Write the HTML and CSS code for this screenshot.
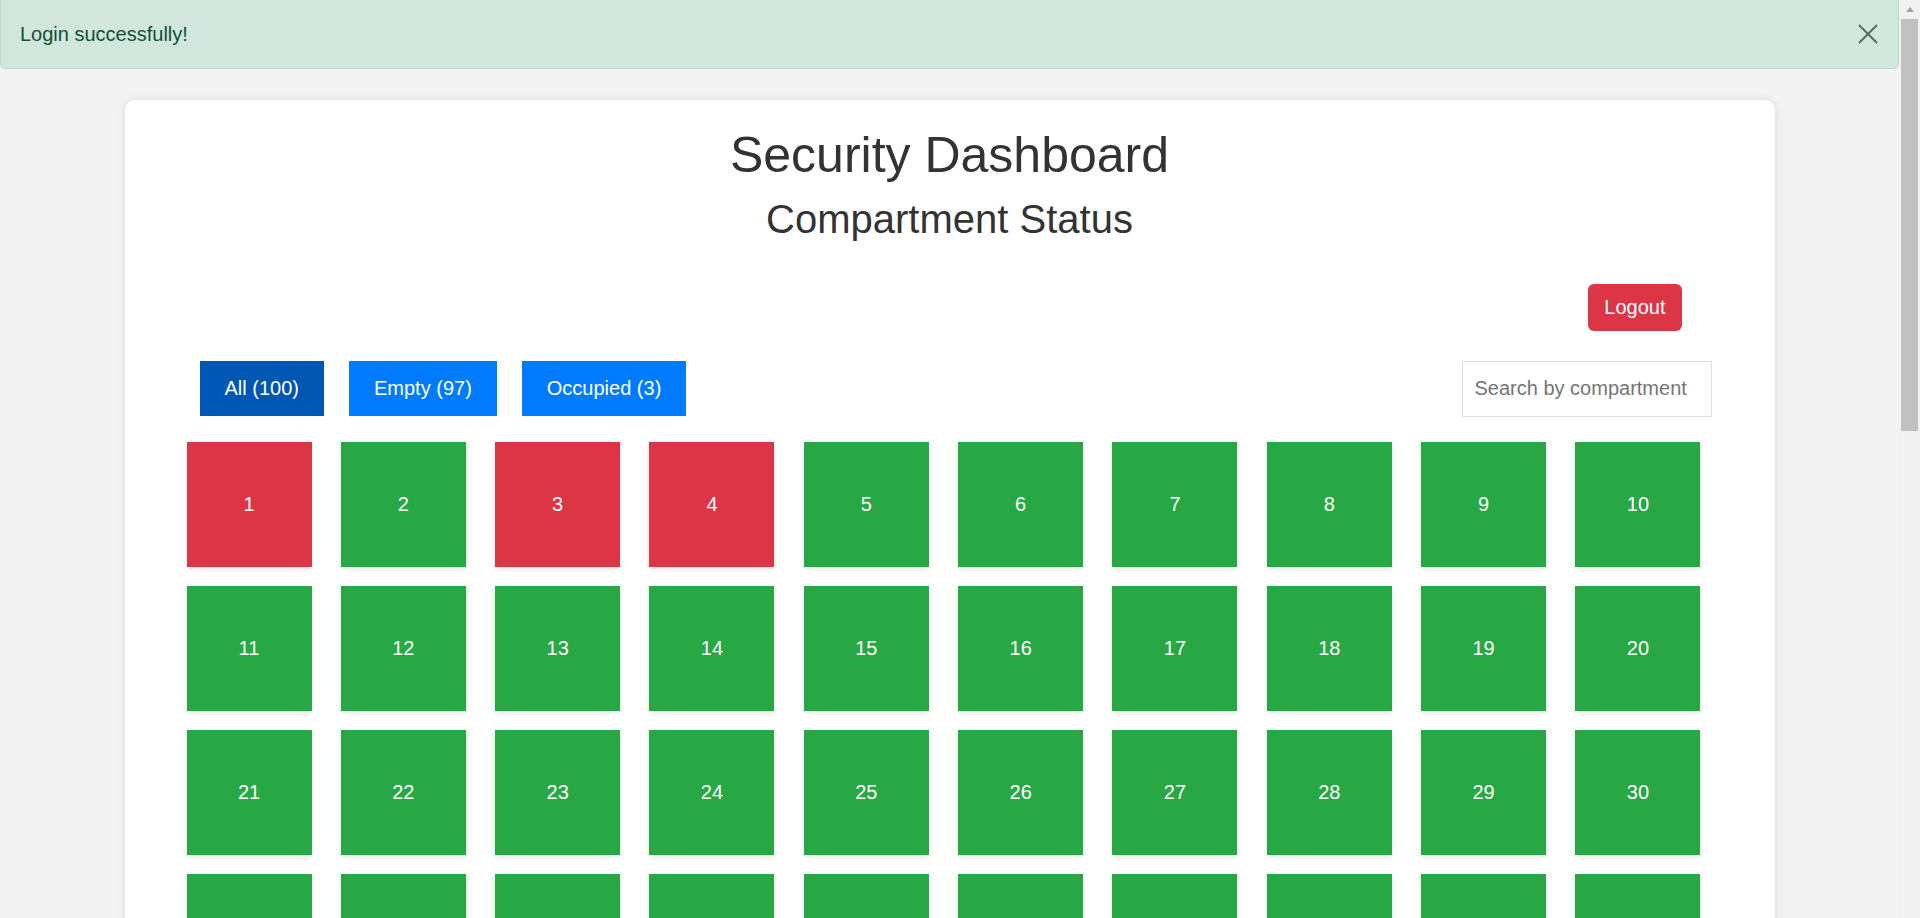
FILE: index.html
```html
<!DOCTYPE html>
<html lang="en">
<head>
<meta charset="utf-8">
<title>Security Dashboard</title>
<link rel="stylesheet" href="styles.css">
</head>
<body>
<div class="window">
  <div class="page">
    <div class="alert">
      <span class="alert-text">Login successfully!</span>
      <button class="alert-close" aria-label="Close">
        <svg width="20" height="20" viewBox="0 0 20 20"><path d="M1 1 L19 19 M19 1 L1 19" stroke="#000" stroke-width="2" fill="none"/></svg>
      </button>
    </div>
    <div class="card">
      <h1 class="title">Security Dashboard</h1>
      <h2 class="subtitle">Compartment Status</h2>
      <div class="toolbar">
        <button class="logout">Logout</button>
      </div>
      <div class="filters">
        <div class="filter-group">
          <button class="filter active">All (100)</button>
          <button class="filter">Empty (97)</button>
          <button class="filter">Occupied (3)</button>
        </div>
        <input class="search" type="text" placeholder="Search by compartment">
      </div>
      <div class="grid">
        <div class="tile occupied">1</div><div class="tile">2</div><div class="tile occupied">3</div><div class="tile occupied">4</div><div class="tile">5</div><div class="tile">6</div><div class="tile">7</div><div class="tile">8</div><div class="tile">9</div><div class="tile">10</div>
        <div class="tile">11</div><div class="tile">12</div><div class="tile">13</div><div class="tile">14</div><div class="tile">15</div><div class="tile">16</div><div class="tile">17</div><div class="tile">18</div><div class="tile">19</div><div class="tile">20</div>
        <div class="tile">21</div><div class="tile">22</div><div class="tile">23</div><div class="tile">24</div><div class="tile">25</div><div class="tile">26</div><div class="tile">27</div><div class="tile">28</div><div class="tile">29</div><div class="tile">30</div>
        <div class="tile">31</div><div class="tile">32</div><div class="tile">33</div><div class="tile">34</div><div class="tile">35</div><div class="tile">36</div><div class="tile">37</div><div class="tile">38</div><div class="tile">39</div><div class="tile">40</div>
        <div class="tile">41</div><div class="tile">42</div><div class="tile">43</div><div class="tile">44</div><div class="tile">45</div><div class="tile">46</div><div class="tile">47</div><div class="tile">48</div><div class="tile">49</div><div class="tile">50</div>
        <div class="tile">51</div><div class="tile">52</div><div class="tile">53</div><div class="tile">54</div><div class="tile">55</div><div class="tile">56</div><div class="tile">57</div><div class="tile">58</div><div class="tile">59</div><div class="tile">60</div>
        <div class="tile">61</div><div class="tile">62</div><div class="tile">63</div><div class="tile">64</div><div class="tile">65</div><div class="tile">66</div><div class="tile">67</div><div class="tile">68</div><div class="tile">69</div><div class="tile">70</div>
        <div class="tile">71</div><div class="tile">72</div><div class="tile">73</div><div class="tile">74</div><div class="tile">75</div><div class="tile">76</div><div class="tile">77</div><div class="tile">78</div><div class="tile">79</div><div class="tile">80</div>
        <div class="tile">81</div><div class="tile">82</div><div class="tile">83</div><div class="tile">84</div><div class="tile">85</div><div class="tile">86</div><div class="tile">87</div><div class="tile">88</div><div class="tile">89</div><div class="tile">90</div>
        <div class="tile">91</div><div class="tile">92</div><div class="tile">93</div><div class="tile">94</div><div class="tile">95</div><div class="tile">96</div><div class="tile">97</div><div class="tile">98</div><div class="tile">99</div><div class="tile">100</div>
      </div>
    </div>
  </div>
  <div class="scrollbar">
    <div class="scroll-arrow"></div>
    <div class="scroll-thumb"></div>
  </div>
</div>
</body>
</html>
```
FILE: styles.css
```css
html, body {
  margin: 0;
  padding: 0;
  height: 100%;
  overflow: hidden;
}

body {
  background: #f3f3f3;
  font-family: "Liberation Sans", Arial, sans-serif;
  color: #333;
}

.window {
  display: flex;
  height: 918px;
}

.page {
  flex: 1;
  overflow: hidden;
}

.alert {
  box-sizing: border-box;
  height: 69px;
  display: flex;
  align-items: center;
  justify-content: space-between;
  padding: 0 20px 0 19px;
  background: #d1e7dd;
  border: 1px solid #badbcc;
  border-top: none;
  border-radius: 0 0 6px 6px;
  color: #0f5132;
  font-size: 20px;
}

.alert-close {
  border: none;
  background: transparent;
  padding: 0;
  width: 20px;
  height: 20px;
  opacity: 0.55;
  cursor: pointer;
}

.alert-close svg {
  display: block;
}

.card {
  width: 1650px;
  margin: 31px auto 0;
  min-height: 1000px;
  background: #fff;
  border-radius: 10px;
  box-shadow: 0 0 10px rgba(0, 0, 0, 0.1);
  padding-top: 26px;
}

.title {
  margin: 0;
  font-size: 50px;
  font-weight: 400;
  line-height: normal;
  text-align: center;
  color: #333;
}

.subtitle {
  margin: 12.5px 0 0;
  font-size: 40px;
  font-weight: 400;
  line-height: normal;
  text-align: center;
  color: #333;
}

.toolbar {
  display: flex;
  justify-content: flex-end;
  margin-top: 42px;
  padding-right: 93px;
}

.logout {
  border: none;
  background: #dc3545;
  color: #fff;
  font-family: inherit;
  font-size: 20px;
  line-height: 23px;
  padding: 12px 16px;
  border-radius: 6px;
}

.filters {
  display: flex;
  justify-content: space-between;
  align-items: center;
  margin-top: 30px;
  padding: 0 63px 0 75px;
}

.filter-group {
  display: flex;
  gap: 25px;
}

.filter {
  border: none;
  height: 55px;
  padding: 0 25px;
  background: #007bff;
  color: #fff;
  font-family: inherit;
  font-size: 20px;
}

.filter.active {
  background: #0056b3;
}

.search {
  box-sizing: border-box;
  width: 250px;
  height: 56px;
  padding: 0 12px;
  border: 1px solid #ddd;
  border-radius: 0;
  font-family: inherit;
  font-size: 20px;
  color: #333;
  outline: none;
}

.search::placeholder {
  color: #757575;
}

.grid {
  display: grid;
  grid-template-columns: repeat(10, 125px);
  column-gap: 29.33px;
  row-gap: 19.2px;
  margin-top: 25px;
  padding-left: 62px;
}

.tile {
  height: 125px;
  display: flex;
  align-items: center;
  justify-content: center;
  background: #28a745;
  color: #fff;
  font-size: 20px;
  box-shadow: 0 2px 5px rgba(0, 0, 0, 0.1);
}

.tile.occupied {
  background: #dc3545;
}

.scrollbar {
  width: 21px;
  background: #f1f1f1;
  display: flex;
  flex-direction: column;
  align-items: center;
}

.scroll-arrow {
  width: 0;
  height: 0;
  margin-top: 7px;
  margin-bottom: 7px;
  border-left: 4.5px solid transparent;
  border-right: 4.5px solid transparent;
  border-bottom: 5px solid #a3a3a3;
}

.scroll-thumb {
  width: 17px;
  height: 412px;
  background: #c1c1c1;
}
```
